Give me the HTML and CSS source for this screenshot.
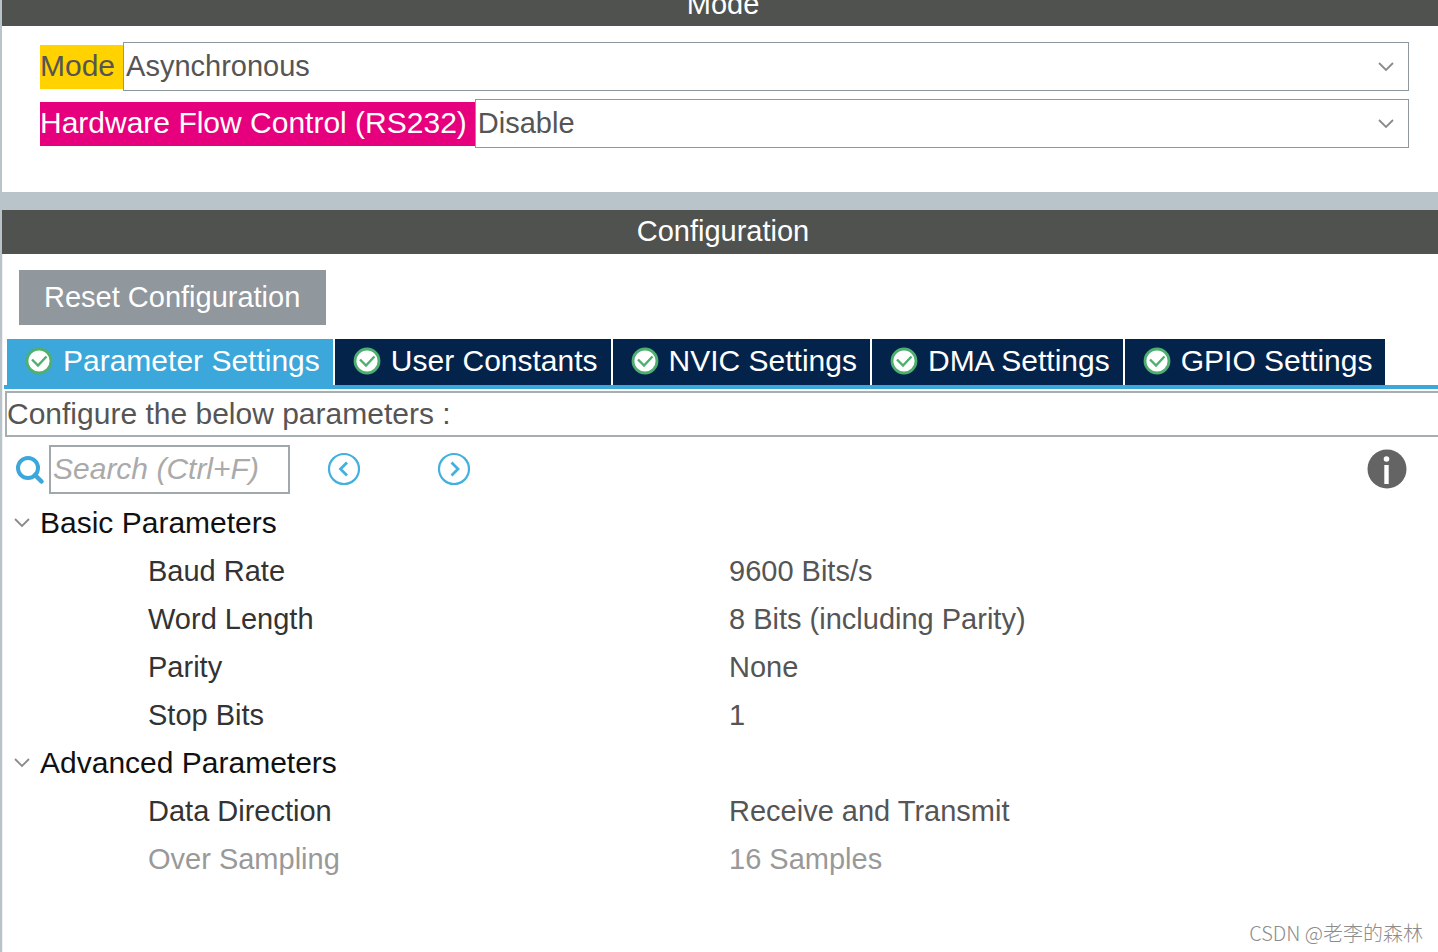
FILE: index.html
```html
<!DOCTYPE html>
<html lang="en">
<head>
<meta charset="utf-8">
<title>Mode and Configuration</title>
<link rel="stylesheet" href="styles.css">
</head>
<body>
<svg class="defs" aria-hidden="true">
  <symbol id="check" viewBox="0 0 28 28">
    <circle cx="14" cy="14" r="12" fill="#fff" stroke="#4db06f" stroke-width="2.800"/>
    <path d="M7 12.500l6 6 8.500-9" fill="none" stroke="#4db06f" stroke-width="2.400"/>
  </symbol>
  <symbol id="chevron" viewBox="0 0 18 10">
    <path d="M2 1l7 7 7-7" fill="none" stroke="#8a8a8a" stroke-width="1.800"/>
  </symbol>
</svg>
<main class="page">
  <section class="panel">
    <h2 class="bar bar-cut">Mode</h2>
    <div class="modes">
      <div class="field">
        <label class="tag tag-yellow" for="mode">Mode</label>
        <div class="pick">
          <select id="mode"><option>Asynchronous</option></select>
          <svg class="pick-arrow"><use href="#chevron"/></svg>
        </div>
      </div>
      <div class="field">
        <label class="tag tag-pink" for="flow">Hardware Flow Control (RS232)</label>
        <div class="pick">
          <select id="flow"><option>Disable</option></select>
          <svg class="pick-arrow"><use href="#chevron"/></svg>
        </div>
      </div>
    </div>
  </section>

  <section class="panel panel-grow">
    <h2 class="bar">Configuration</h2>
    <div class="actions"><button class="reset" type="button">Reset Configuration</button></div>
    <div class="tabs" role="tablist">
      <button class="tab tab-on" role="tab" aria-selected="true"><svg class="check"><use href="#check"/></svg>Parameter Settings</button>
      <button class="tab" role="tab"><svg class="check"><use href="#check"/></svg>User Constants</button>
      <button class="tab" role="tab"><svg class="check"><use href="#check"/></svg>NVIC Settings</button>
      <button class="tab" role="tab"><svg class="check"><use href="#check"/></svg>DMA Settings</button>
      <button class="tab" role="tab"><svg class="check"><use href="#check"/></svg>GPIO Settings</button>
    </div>
    <p class="hint">Configure the below parameters :</p>
    <div class="toolbar">
      <label class="glass" for="search" aria-label="Search">
        <svg width="30" height="30" viewBox="0 0 30 30" fill="none" stroke="#3ba7da">
          <circle cx="13" cy="13" r="10" stroke-width="4"/>
          <path d="M20 20l6.500 6.500" stroke-width="4.500" stroke-linecap="round"/>
        </svg>
      </label>
      <input class="search" id="search" type="text" placeholder="Search (Ctrl+F)">
      <button class="round" type="button" aria-label="Previous">
        <svg width="34" height="34" viewBox="0 0 34 34" fill="none" stroke="#43b0e0" stroke-width="2.200">
          <circle cx="17" cy="17" r="15"/><path d="M20 10.500L13.500 17l6.500 6.500" stroke-width="2.800"/>
        </svg>
      </button>
      <button class="round round-next" type="button" aria-label="Next">
        <svg width="34" height="34" viewBox="0 0 34 34" fill="none" stroke="#43b0e0" stroke-width="2.200">
          <circle cx="17" cy="17" r="15"/><path d="M14.500 10.500L21 17l-6.500 6.500" stroke-width="2.800"/>
        </svg>
      </button>
      <button class="round info" type="button" aria-label="Information">
        <svg width="40" height="40" viewBox="0 0 40 40">
          <circle cx="20" cy="20" r="19.500" fill="#646464"/>
          <circle cx="19.500" cy="10" r="2.800" fill="#fff"/>
          <rect x="17.300" y="16" width="4.400" height="19" fill="#fff"/>
        </svg>
      </button>
    </div>
    <table class="params">
      <colgroup><col class="col-name"><col></colgroup>
      <tbody>
        <tr class="group"><th colspan="2"><button type="button"><svg class="fold"><use href="#chevron"/></svg>Basic Parameters</button></th></tr>
        <tr><th>Baud Rate</th><td>9600 Bits/s</td></tr>
        <tr><th>Word Length</th><td>8 Bits (including Parity)</td></tr>
        <tr><th>Parity</th><td>None</td></tr>
        <tr><th>Stop Bits</th><td>1</td></tr>
      </tbody>
      <tbody>
        <tr class="group"><th colspan="2"><button type="button"><svg class="fold"><use href="#chevron"/></svg>Advanced Parameters</button></th></tr>
        <tr><th>Data Direction</th><td>Receive and Transmit</td></tr>
        <tr class="off"><th>Over Sampling</th><td>16 Samples</td></tr>
      </tbody>
    </table>
  </section>
</main>
<div class="credit">CSDN @老李的森林</div>
</body>
</html>
```
FILE: styles.css
```css
* { box-sizing: border-box; }
body {
  margin: 0;
  background: #b8c4ca;
  color: #555;
  font: 30px/44px "Liberation Sans", Arial, sans-serif;
  overflow: hidden;
}
button, input, select { font: inherit; color: inherit; margin: 0; padding: 0; border: 0; background: none; }
.defs { position: absolute; width: 0; height: 0; }

.page {
  display: flex;
  flex-direction: column;
  gap: 18px;
  min-height: 100vh;
  padding-left: 2px;
}
.panel { background: #fff; }
.panel-grow { flex: 1; border-left: 1px solid #eef0f1; }
.bar {
  margin: 0;
  padding-left: 6px;
  height: 44px;
  background: #505250;
  color: #fff;
  font-size: 29px;
  font-weight: 400;
  line-height: 42px;
  text-align: center;
}
.panel-grow .bar { margin-left: -1px; }
.bar-cut { margin-top: -18px; line-height: 44px; }

.modes {
  display: flex;
  flex-direction: column;
  gap: 8px;
  padding: 16px 29px 44px 38px;
}
.field { display: flex; align-items: center; }
.tag { padding: 0 8px 2px 0; line-height: 42px; white-space: nowrap; }
.tag-yellow { background: #ffd200; }
.tag-pink { background: #e6007e; color: #fff; }
.pick { position: relative; flex: 1; }
.pick select {
  display: block;
  width: 100%;
  height: 49px;
  padding: 0 48px 2px 2px;
  border: 1px solid #8f989e;
  background: #fff;
  appearance: none;
  font-size: 29px;
}
.pick-arrow {
  position: absolute;
  right: 14px;
  top: 20px;
  width: 18px;
  height: 10px;
  pointer-events: none;
}

.actions { padding: 16px 16px 14px; }
.reset {
  display: block;
  height: 55px;
  padding: 0 26px 2px 25px;
  background: #90979d;
  color: #fff;
  font-size: 29px;
}
.tabs {
  display: flex;
  gap: 2px;
  margin-left: 1px;
  padding-left: 3px;
  border-bottom: 4px solid #3ba7da;
}
.tab {
  display: flex;
  align-items: center;
  gap: 10px;
  height: 46px;
  padding: 0 13px 2px 18px;
  background: #03234b;
  color: #fff;
  white-space: nowrap;
}
.tab-on { background: #3ba7da; }
.check { width: 28px; height: 28px; }

.hint {
  margin: 2px 0 0 2px;
  border: 2px solid #a7aeb2;
  border-right: 0;
  line-height: 42px;
}
.toolbar {
  display: flex;
  align-items: center;
  padding: 8px 31px 6px 12px;
}
.glass { display: flex; width: 34px; }
.search {
  width: 241px;
  height: 49px;
  padding: 0 2px 2px;
  border: 2px solid #a0a8ac;
  background: #fff;
}
.search::placeholder { color: #aaa; font-style: italic; opacity: 1; }
.round { display: flex; margin-left: 37px; padding-bottom: 2px; }
.round-next { margin-left: 76px; }
.info { margin-left: auto; }

.params { width: 100%; border-collapse: collapse; table-layout: fixed; }
.col-name { width: 726px; }
.params tr { height: 48px; }
.params th, .params td { padding: 0 0 2px; font-weight: 400; text-align: left; font-size: 29px; }
.params th { padding-left: 145px; color: #333; }
.params .group th { padding-left: 10px; color: #111; font-size: 30px; }
.params .off, .params .off th { color: #999; }
.group button { display: flex; align-items: center; gap: 9px; }
.fold { width: 18px; height: 10px; }

.credit {
  position: absolute;
  right: 15px;
  bottom: 4px;
  color: #8c8c8c;
  font: 300 20px/30px "Noto Sans CJK SC", sans-serif;
}
```
